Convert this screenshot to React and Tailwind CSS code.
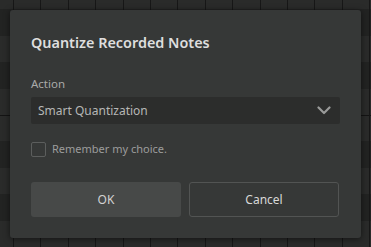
import { useState } from 'react';

const rows = ['L', 'D', 'L', 'D', 'L', 'C', 'D', 'L', 'D', 'L'];

function Backdrop() {
  return (
    <div className="absolute inset-0">
      <div className="flex flex-col -mt-[17px]">
        {rows.map((r, i) => (
          <div
            key={i}
            className={
              r === 'D'
                ? 'h-[26.4px] bg-[#222322]'
                : r === 'C'
                ? 'h-[26.4px] bg-[#2a2b2a] border-t border-[#141414]'
                : 'h-[26.4px] bg-[#2a2b2a]'
            }
          />
        ))}
      </div>
      <div className="absolute inset-0 flex pl-[13px]">
        {Array.from({ length: 14 }).map((_, i) => (
          <div key={i} className="w-[27.4px] shrink-0 border-l border-[#171717]" />
        ))}
      </div>
    </div>
  );
}

function Chevron() {
  return (
    <svg width="14" height="9" viewBox="0 0 14 9" fill="none">
      <path d="M1.5 1.5 L7 7 L12.5 1.5" stroke="#9a9b9a" strokeWidth="2.2" strokeLinecap="round" strokeLinejoin="round" />
    </svg>
  );
}

export default function App() {
  const [remember, setRemember] = useState(false);

  return (
    <div className="relative w-[371px] h-[247px] overflow-hidden bg-[#2a2b2a] font-['Noto_Sans',sans-serif]">
      <Backdrop />
      <div className="absolute left-[10px] top-[10px] w-[351px] h-[228px] rounded-[3px] bg-[#363837] shadow-[0_1px_6px_rgba(0,0,0,0.55)] px-[21px] pt-[23px] pb-[21px] flex flex-col">
        <h2 className="text-[14.4px] leading-[20px] font-semibold text-[#dedede]">Quantize Recorded Notes</h2>

        <label className="mt-[22px] text-[11.5px] leading-[18px] text-[#a9aaa9]">Action</label>
        <div className="mt-[4px] h-[27px] rounded-[2px] bg-[#2c2d2c] flex items-center justify-between pl-[7px] pr-[9px]">
          <span className="text-[12px] text-[#b6b7b6]">Smart Quantization</span>
          <Chevron />
        </div>

        <div className="mt-[17px] h-[16px] flex items-center gap-[6px]" onClick={() => setRemember(!remember)}>
          <div className="w-[15px] h-[15px] rounded-[2px] border border-[#5c5e5d]" />
          <span className="text-[11px] text-[#9c9d9c]">Remember my choice.</span>
        </div>

        <div className="mt-[25px] flex gap-[8px]">
          <button className="w-[150px] h-[35px] rounded-[3px] bg-[#474948] text-[12px] text-[#d2d2d2]">OK</button>
          <button className="w-[150px] h-[35px] rounded-[3px] border border-[#525453] bg-[#363837] text-[12px] text-[#d8d8d8]">Cancel</button>
        </div>
      </div>
    </div>
  );
}
